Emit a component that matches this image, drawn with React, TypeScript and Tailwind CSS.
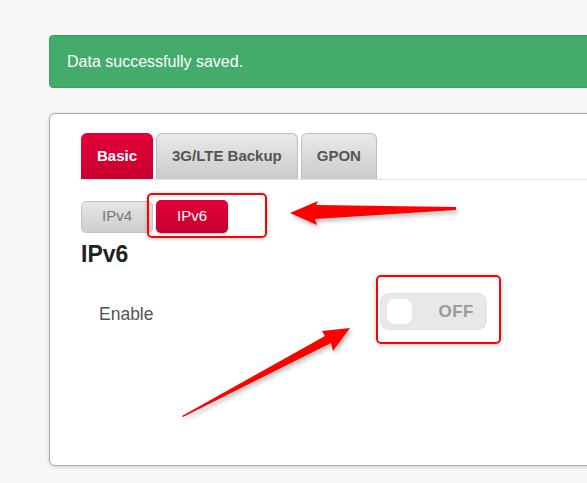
import { useState } from 'react';

const tabs = ['Basic', '3G/LTE Backup', 'GPON'];

function Toggle({ on }: { on: boolean }) {
    return (
        <div className="flex h-[37px] w-[107px] items-center rounded-[9px] bg-[#e8e8e8] pl-[7px] pr-[13px] shadow-[inset_0_0_2px_rgba(0,0,0,0.08)]">
            <span className="h-[25px] w-[25px] rounded-[8px] bg-white" />
            <span className="ml-auto text-[17px] font-bold tracking-[0.5px] text-[#9a9a9a]">{on ? 'ON' : 'OFF'}</span>
        </div>
    );
}

function Arrows() {
    return (
        <svg className="pointer-events-none absolute left-0 top-0" width="587" height="483">
            <defs>
                <filter id="sh" x="-20%" y="-50%" width="140%" height="200%">
                    <feDropShadow dx="2" dy="3" stdDeviation="2" floodColor="#000" floodOpacity="0.25" />
                </filter>
            </defs>
            <polygon points="456,207 316,205 318,201 290,213 317,225 315,219 456,210" fill="#ff0000" filter="url(#sh)" />
            <polygon points="182,416 325,336 322,331 350,328 333,351 331,343 183,417" fill="#ff0000" filter="url(#sh)" />
        </svg>
    );
}

export default function App() {
    const [active] = useState('Basic');
    return (
        <div className="relative h-[483px] w-[587px] overflow-hidden bg-[#f7f7f7] font-['Liberation_Sans',Arial,sans-serif]">
            <div className="pl-[49px] pt-[35px]">
                <div className="flex h-[53px] w-[600px] items-center rounded-[4px] border border-[#3d9c60] bg-[#43ac6a] pl-[17px] text-[16px] text-white">
                    Data successfully saved.
                </div>
                <div className="mt-[25px] h-[353px] w-[600px] rounded-[6px] border border-[#a9a9a9] bg-white pl-[31px] pt-[20px] shadow-[0_1px_4px_rgba(0,0,0,0.15)]">
                    <div className="flex h-[46px] items-end gap-[3px] border-b border-[#e2e2e2]">
                        {tabs.map((t) => (
                            <div
                                key={t}
                                className={
                                    t === active
                                        ? 'flex h-[46px] items-center rounded-t-[6px] bg-gradient-to-b from-[#e4003b] to-[#c8002f] px-[16px] text-[15px] font-bold text-white'
                                        : 'flex h-[46px] items-center rounded-t-[6px] border border-b-0 border-[#bdbdbd] bg-gradient-to-b from-[#e9e9e9] to-[#cbcbcb] px-[15px] text-[15px] font-bold text-[#555]'
                                }
                            >
                                {t}
                            </div>
                        ))}
                    </div>
                    <div className="mt-[20px] flex items-center gap-[3px]">
                        <div className="flex h-[32px] w-[72px] items-center justify-center rounded-[5px] border border-[#c4c4c4] bg-gradient-to-b from-[#e6e6e6] to-[#cdcdcd] text-[15px] text-[#777]">
                            IPv4
                        </div>
                        <div className="flex h-[33px] w-[72px] items-center justify-center rounded-[5px] bg-gradient-to-b from-[#e2003a] to-[#c6002e] text-[15px] text-white shadow-[0_1px_2px_rgba(0,0,0,0.3)]">
                            IPv6
                        </div>
                    </div>
                    <h2 className="mt-[8px] text-[23px] font-bold leading-[26px] text-[#222]">IPv6</h2>
                    <div className="mt-[26px] flex items-center">
                        <span className="ml-[18px] w-[281px] pt-[5px] text-[17.5px] text-[#555]">Enable</span>
                        <Toggle on={false} />
                    </div>
                </div>
            </div>
            <div className="pointer-events-none absolute left-[147px] top-[193px] h-[45px] w-[120px] rounded-[5px] border-2 border-[#ff0000] shadow-[0_1px_4px_rgba(0,0,0,0.2)]" />
            <div className="pointer-events-none absolute left-[376px] top-[275px] h-[69px] w-[125px] rounded-[5px] border-2 border-[#ff0000] shadow-[0_1px_5px_rgba(0,0,0,0.2)]" />
            <Arrows />
        </div>
    );
}
